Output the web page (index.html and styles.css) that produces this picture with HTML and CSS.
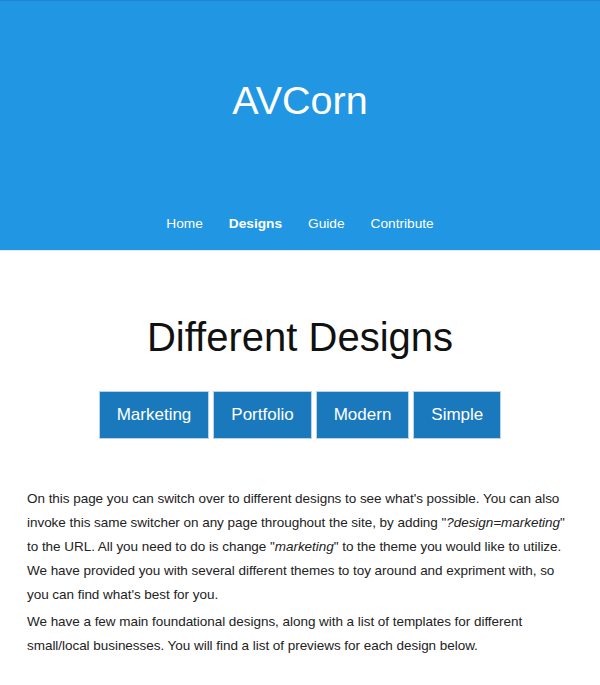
FILE: index.html
```html
<!DOCTYPE html>
<html lang="en">
<head>
<meta charset="utf-8">
<title>AVCorn - Designs</title>
<link rel="stylesheet" href="styles.css">
</head>
<body>
<header class="site-header">
  <h1 class="site-title">AVCorn</h1>
  <nav class="site-nav">
    <a href="#" class="nav-link">Home</a>
    <a href="#" class="nav-link active">Designs</a>
    <a href="#" class="nav-link">Guide</a>
    <a href="#" class="nav-link">Contribute</a>
  </nav>
</header>
<main class="content">
  <h2 class="page-title">Different Designs</h2>
  <div class="design-buttons">
    <a href="#" class="design-btn">Marketing</a>
    <a href="#" class="design-btn">Portfolio</a>
    <a href="#" class="design-btn">Modern</a>
    <a href="#" class="design-btn">Simple</a>
  </div>
  <p class="text">On this page you can switch over to different designs to see what's possible. You can also invoke this same switcher on any page throughout the site, by adding "<em>?design=marketing</em>" to the URL. All you need to do is change "<em>marketing</em>" to the theme you would like to utilize. We have provided you with several different themes to toy around and expriment with, so you can find what's best for you.</p>
  <p class="text">We have a few main foundational designs, along with a list of templates for different small/local businesses. You will find a list of previews for each design below.</p>
</main>
</body>
</html>
```

FILE: styles.css
```css
* { box-sizing: border-box; }
html, body { margin: 0; padding: 0; background: #ffffff; }
body {
  font-family: "Liberation Sans", Arial, sans-serif;
  color: #1e1e1e;
}
.site-header {
  background: #2196e3;
  border-top: 1px solid #1d86cf;
  border-bottom: 1px solid #e3ebf6;
  height: 251px;
  display: flex;
  flex-direction: column;
  align-items: center;
  color: #ffffff;
}
.site-title {
  margin: 76px 0 0;
  font-size: 39.5px;
  font-weight: normal;
  line-height: 46px;
}
.site-nav {
  margin-top: 92px;
  display: flex;
  gap: 26px;
}
.nav-link {
  color: #ffffff;
  text-decoration: none;
  font-size: 13.7px;
  line-height: 18px;
}
.nav-link.active { font-weight: bold; }
.content {
  padding: 0 27px;
}
.page-title {
  margin: 62px 0 0;
  text-align: center;
  font-size: 40px;
  font-weight: normal;
  line-height: 48px;
  color: #111;
}
.design-buttons {
  margin-top: 30px;
  display: flex;
  justify-content: center;
  gap: 4px;
}
.design-btn {
  display: block;
  background: #1a79bd;
  color: #ffffff;
  text-decoration: none;
  font-size: 17px;
  line-height: 19px;
  padding: 13px 17px 14px;
  border: 1px solid #bcd3e6;
}
.text {
  margin: 0 0 3px;
  font-size: 13.5px;
  letter-spacing: -0.04px;
  line-height: 24px;
  color: #222;
}
.design-buttons + .text { margin-top: 48px; }
.text em { font-style: italic; }
```
